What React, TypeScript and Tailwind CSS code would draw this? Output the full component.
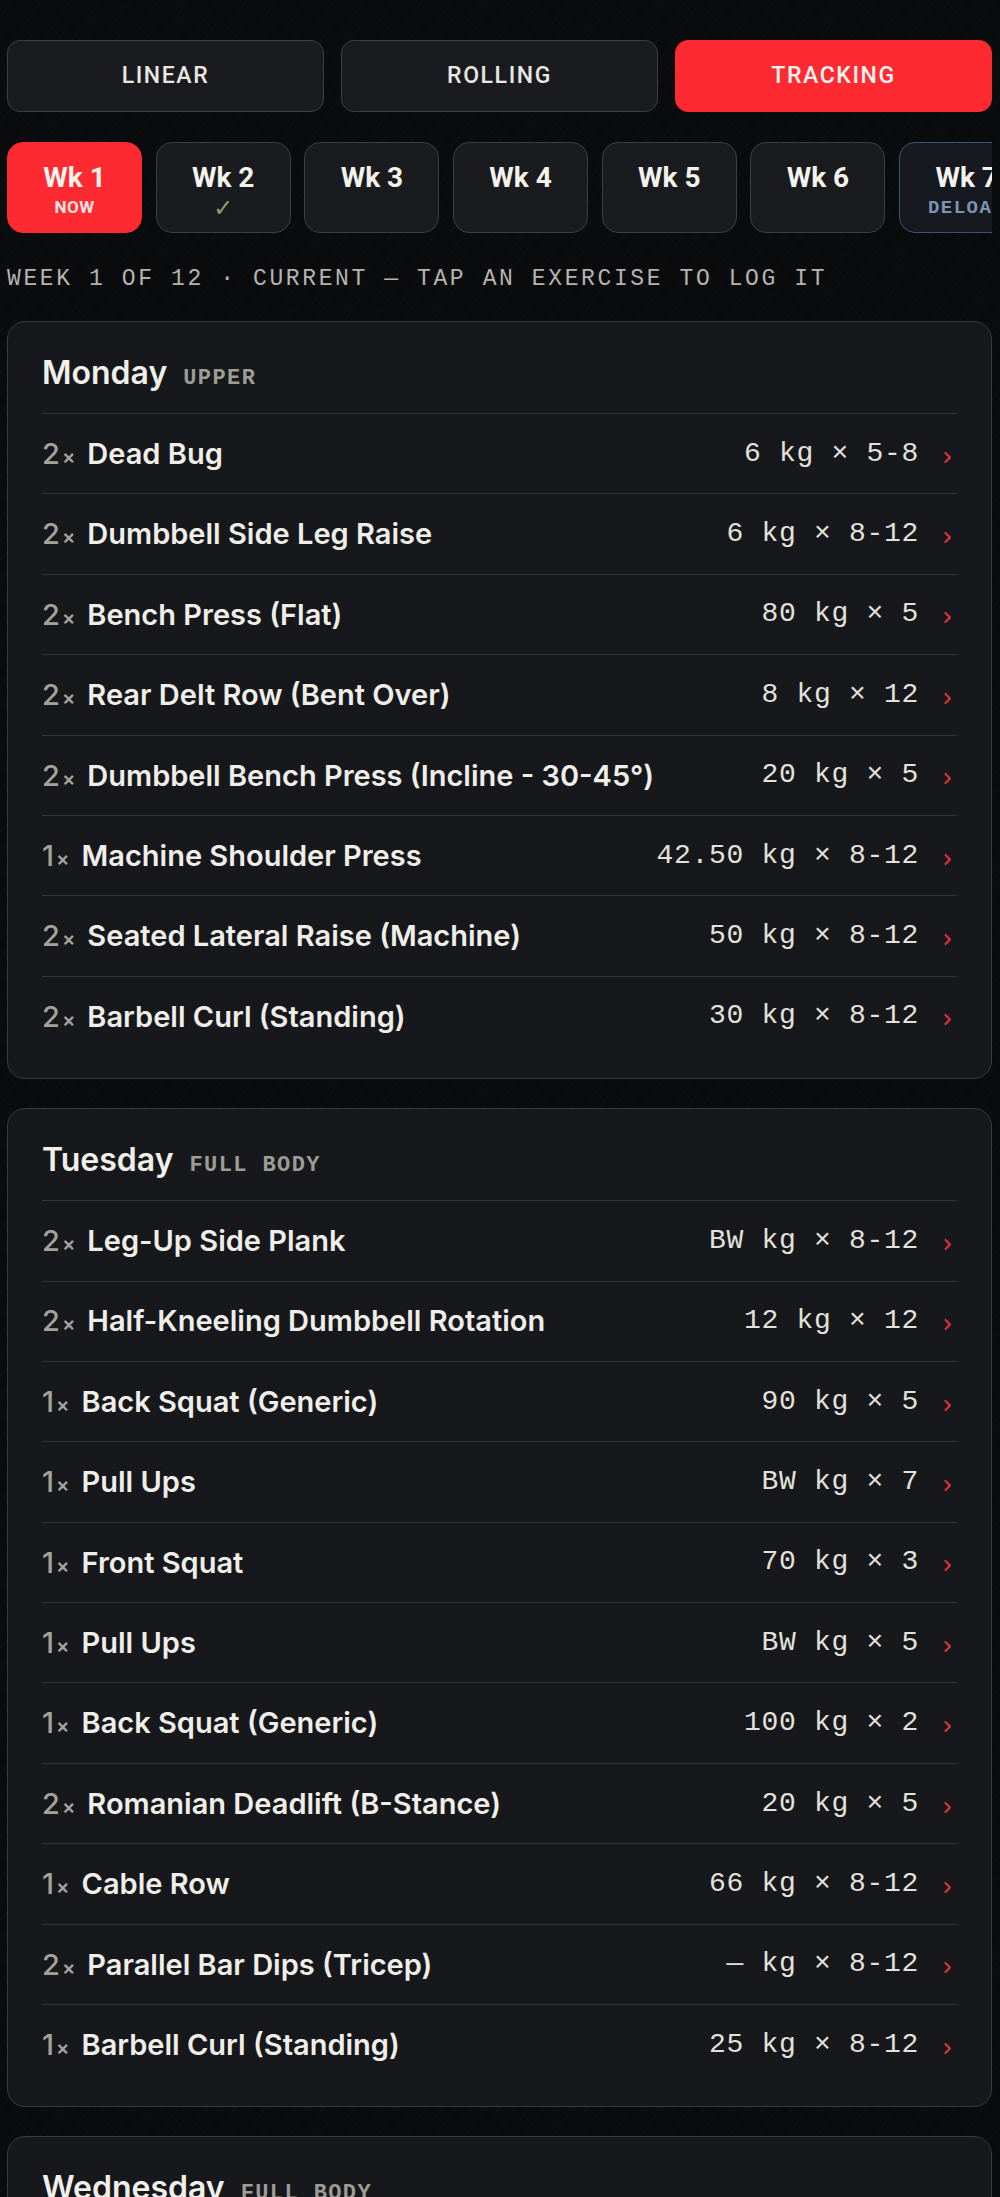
import React from 'react'

type Exercise = {
  sets: number
  name: string
  load: string
  reps: string
}

type Day = {
  day: string
  tag: string
  items: Exercise[]
}

const SANS = "font-['Roboto','Noto_Sans',sans-serif]"
const BODY = "font-['Inter','Roboto',sans-serif]"
const MONO = "font-['Liberation_Mono','DejaVu_Sans_Mono',monospace]"

const modes = ['LINEAR', 'ROLLING', 'TRACKING']

const weeks = [
  { label: 'Wk 1', note: 'NOW' },
  { label: 'Wk 2', note: '✓' },
  { label: 'Wk 3' },
  { label: 'Wk 4' },
  { label: 'Wk 5' },
  { label: 'Wk 6' },
  { label: 'Wk 7', note: 'DELOAD' },
  { label: 'Wk 8' },
]

const days: Day[] = [
  {
    day: 'Monday',
    tag: 'UPPER',
    items: [
      { sets: 2, name: 'Dead Bug', load: '6', reps: '5-8' },
      { sets: 2, name: 'Dumbbell Side Leg Raise', load: '6', reps: '8-12' },
      { sets: 2, name: 'Bench Press (Flat)', load: '80', reps: '5' },
      { sets: 2, name: 'Rear Delt Row (Bent Over)', load: '8', reps: '12' },
      { sets: 2, name: 'Dumbbell Bench Press (Incline - 30-45°)', load: '20', reps: '5' },
      { sets: 1, name: 'Machine Shoulder Press', load: '42.50', reps: '8-12' },
      { sets: 2, name: 'Seated Lateral Raise (Machine)', load: '50', reps: '8-12' },
      { sets: 2, name: 'Barbell Curl (Standing)', load: '30', reps: '8-12' },
    ],
  },
  {
    day: 'Tuesday',
    tag: 'FULL BODY',
    items: [
      { sets: 2, name: 'Leg-Up Side Plank', load: 'BW', reps: '8-12' },
      { sets: 2, name: 'Half-Kneeling Dumbbell Rotation', load: '12', reps: '12' },
      { sets: 1, name: 'Back Squat (Generic)', load: '90', reps: '5' },
      { sets: 1, name: 'Pull Ups', load: 'BW', reps: '7' },
      { sets: 1, name: 'Front Squat', load: '70', reps: '3' },
      { sets: 1, name: 'Pull Ups', load: 'BW', reps: '5' },
      { sets: 1, name: 'Back Squat (Generic)', load: '100', reps: '2' },
      { sets: 2, name: 'Romanian Deadlift (B-Stance)', load: '20', reps: '5' },
      { sets: 1, name: 'Cable Row', load: '66', reps: '8-12' },
      { sets: 2, name: 'Parallel Bar Dips (Tricep)', load: '—', reps: '8-12' },
      { sets: 1, name: 'Barbell Curl (Standing)', load: '25', reps: '8-12' },
    ],
  },
  {
    day: 'Wednesday',
    tag: 'FULL BODY',
    items: [
      { sets: 2, name: 'Goblet Squat', load: '24', reps: '8-12' },
      { sets: 1, name: 'Lat Pulldown', load: '60', reps: '8-12' },
    ],
  },
]

function Chevron() {
  return (
    <svg width="10" height="14" viewBox="0 0 10 14" className="mt-[6px] shrink-0">
      <path d="M2.5 3 L7 7.5 L2.5 12" fill="none" stroke="#d9343b" strokeWidth="2.2" strokeLinecap="round" strokeLinejoin="round" />
    </svg>
  )
}

function ExerciseRow({ ex }: { ex: Exercise }) {
  return (
    <div className="h-[80.4px] border-t border-[#333438] flex items-center justify-between">
      <div className={`flex items-baseline ${BODY} text-[29px] font-semibold`}>
        <span className="text-[#a3a29b] font-medium">{ex.sets}</span>
        <span className="text-[#a3a29b] text-[20px] ml-[2px] mr-[12px]">×</span>
        <span className="text-[#efeee9]">{ex.name}</span>
      </div>
      <div className="flex items-center gap-[24px] pr-[4px]">
        <span className={`${MONO} text-[28px] tracking-[0.7px] text-[#e2e1db] whitespace-pre`}>
          {`${ex.load} kg × ${ex.reps}`}
        </span>
        <Chevron />
      </div>
    </div>
  )
}

function DayCard({ d }: { d: Day }) {
  return (
    <div className="rounded-[18px] border border-[#3a3b3f] bg-[#17181b] px-[34px] pb-[22px]">
      <div className="h-[91px] pt-[10px] flex items-center">
        <div className="flex items-baseline gap-[16px]">
          <span className={`${BODY} text-[32px] font-semibold text-[#f0efea]`}>{d.day}</span>
          <span className={`${MONO} text-[22px] font-bold tracking-[1.4px] text-[#9d9c95]`}>{d.tag}</span>
        </div>
      </div>
      {d.items.map((ex, i) => (
        <ExerciseRow key={i} ex={ex} />
      ))}
    </div>
  )
}

export default function App() {
  return (
    <div className="h-[2197px] overflow-hidden bg-[#0a0b0d] bg-[repeating-linear-gradient(125deg,#0a0b0d_0px,#0a0b0d_9px,#0e0f12_10px,#0a0b0d_12px)] pl-[7px] pr-[8px] pt-[40px]">
      {/* program mode switch */}
      <div className="flex gap-[17px]">
        {modes.map((m) => {
          const on = m === 'TRACKING'
          return (
            <button
              key={m}
              className={`flex-1 h-[72px] rounded-[13px] ${SANS} text-[23px] font-medium tracking-[1.6px] ${
                on ? 'bg-[#fe2a31] text-[#fff4f2] border border-[#fe2a31]' : 'bg-[#1a1b1e] text-[#e8e7e1] border border-[#3d3e42]'
              }`}
            >
              {m}
            </button>
          )
        })}
      </div>

      {/* week picker, scrolls sideways */}
      <div className="mt-[30px] flex gap-[13.7px] overflow-hidden">
        {weeks.map((w) => {
          const now = w.note === 'NOW'
          const deload = w.note === 'DELOAD'
          return (
            <div
              key={w.label}
              className={`w-[135px] h-[91px] shrink-0 rounded-[16px] flex flex-col items-center pt-[17px] ${
                now
                  ? 'bg-[#fe2a31] border border-[#fe2a31]'
                  : deload
                    ? 'bg-[#16191f] border border-[#3b5275]'
                    : 'bg-[#1a1b1e] border border-[#3d3e42]'
              }`}
            >
              <span className={`${SANS} text-[28px] leading-[36px] font-bold text-[#f3f2ed]`}>{w.label}</span>
              {now && (
                <span className={`${SANS} text-[17px] leading-[22px] font-bold tracking-[0.5px] text-[#ffe3e1]`}>NOW</span>
              )}
              {w.note === '✓' && (
                <span className="text-[24px] leading-[24px] text-[#86a078] font-['DejaVu_Sans',sans-serif]">✓</span>
              )}
              {deload && (
                <span className={`${MONO} text-[19px] leading-[24px] font-bold tracking-[1.5px] text-[#7d93b4]`}>DELOAD</span>
              )}
            </div>
          )
        })}
      </div>

      <div className={`mt-[34px] ${MONO} text-[23px] leading-[24px] tracking-[2.6px] text-[#b5b4ad] whitespace-nowrap`}>
        WEEK 1 OF 12 · CURRENT — TAP AN EXERCISE TO LOG IT
      </div>

      <div className="mt-[30px] flex flex-col gap-[29px]">
        {days.map((d) => (
          <DayCard key={d.day} d={d} />
        ))}
      </div>
    </div>
  )
}
